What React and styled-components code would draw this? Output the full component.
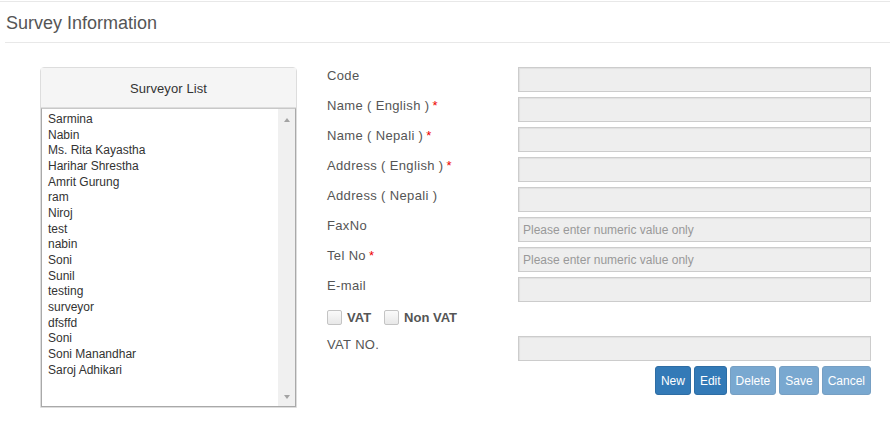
import React from "react";
import styled, { createGlobalStyle } from "styled-components";

const Global = createGlobalStyle`
  html, body { margin: 0; padding: 0; background: #fff; }
  body { font-family: "Liberation Sans", Arial, sans-serif; color: #555; }
  * { box-sizing: border-box; }
`;

const Page = styled.div`
  margin-top: 1px;
  border-top: 1px solid #e8e8e8;
  width: 890px;
  height: 425px;
`;

const Header = styled.div`
  margin-left: 5px;
  height: 41px;
  border-bottom: 1px solid #e8e8e8;
  display: flex;
  align-items: center;
  padding: 1px 0 0 1px;
`;

const Title = styled.h1`
  margin: 0;
  font-size: 18px;
  font-weight: normal;
  color: #555;
  line-height: 20px;
`;

const Main = styled.div`
  display: flex;
  align-items: flex-start;
  padding: 24px 19px 0 40px;
  gap: 30px;
`;

const Panel = styled.div`
  width: 257px;
  height: 341px;
  border: 1px solid #ddd;
  border-radius: 4px 4px 0 0;
  display: flex;
  flex-direction: column;
  background: #fff;
`;

const PanelHeading = styled.div`
  height: 40px;
  background: #f5f5f5;
  border-bottom: 1px solid #ddd;
  display: flex;
  align-items: center;
  justify-content: center;
  font-size: 13px;
  color: #333;
  letter-spacing: 0.1px;
  padding-top: 1px;
`;

const ListBox = styled.div`
  flex: 1;
  display: flex;
  border: 1px solid #a9a9a9;
  border-top-color: #c8c8c8;
  margin: 0;
`;

const Items = styled.ul`
  list-style: none;
  margin: 0;
  padding: 3px 0 0 6px;
  flex: 1;
  font-size: 12px;
  line-height: 15.65px;
  color: #333;
`;

const Item = styled.li`
  white-space: nowrap;
`;

const ScrollBar = styled.div`
  width: 17px;
  background: #f0f0f0;
  display: flex;
  flex-direction: column;
  justify-content: space-between;
  align-items: center;
  padding: 9px 0 7px 0;
`;

const Arrow = styled.span`
  width: 0;
  height: 0;
  border-left: 3.5px solid transparent;
  border-right: 3.5px solid transparent;
  ${(p) =>
    p.$down
      ? "border-top: 4px solid #a3a3a3;"
      : "border-bottom: 4px solid #a3a3a3;"}
`;

const Form = styled.div`
  flex: 1;
  display: flex;
  flex-direction: column;
`;

const Row = styled.div`
  display: flex;
  align-items: flex-start;
  height: 30px;
`;

const Label = styled.label`
  width: 191px;
  font-size: 13px;
  letter-spacing: 0.35px;
  color: #555;
  line-height: 20px;
  margin-top: -1px;
`;

const Req = styled.span`
  color: #e00;
  margin-left: 3px;
`;

const Input = styled.input`
  flex: 1;
  height: 25px;
  border: 1px solid #ccc;
  box-shadow: inset 1px 1px 1px rgba(0, 0, 0, 0.06);
  background: #eee;
  padding: 0 4px;
  font-family: "Liberation Sans", Arial, sans-serif;
  font-size: 12px;
  color: #555;
  outline: none;
  &::placeholder { color: #999; }
`;

const CheckRow = styled.div`
  display: flex;
  align-items: flex-start;
  height: 29px;
  padding-top: 3px;
`;

const CheckLabel = styled.label`
  display: flex;
  align-items: center;
  font-size: 13px;
  font-weight: bold;
  color: #555;
  margin-right: 13px;
`;

const Box = styled.span`
  width: 15px;
  height: 15px;
  border: 1px solid #c4c4c4;
  border-radius: 2px;
  background: linear-gradient(#fafafa, #e8e8e8);
  margin-right: 5px;
`;

const Buttons = styled.div`
  display: flex;
  justify-content: flex-end;
  gap: 3px;
`;

const Button = styled.button`
  height: 29px;
  padding: 0 5px;
  border: 1px solid #2e6da4;
  border-radius: 3px;
  background: #337ab7;
  color: #fff;
  font-family: "Liberation Sans", Arial, sans-serif;
  font-size: 12px;
  opacity: ${(p) => (p.disabled ? 0.65 : 1)};
  cursor: pointer;
`;

const surveyors = [
  "Sarmina",
  "Nabin",
  "Ms. Rita Kayastha",
  "Harihar Shrestha",
  "Amrit Gurung",
  "ram",
  "Niroj",
  "test",
  "nabin",
  "Soni",
  "Sunil",
  "testing",
  "surveyor",
  "dfsffd",
  "Soni",
  "Soni Manandhar",
  "Saroj Adhikari",
];

const fields = [
  { label: "Code" },
  { label: "Name ( English )", req: true },
  { label: "Name ( Nepali )", req: true },
  { label: "Address ( English )", req: true },
  { label: "Address ( Nepali )" },
  { label: "FaxNo", ph: "Please enter numeric value only" },
  { label: "Tel No", req: true, ph: "Please enter numeric value only" },
  { label: "E-mail" },
];

export default function App() {
  return (
    <>
      <Global />
      <Page>
        <Header>
          <Title>Survey Information</Title>
        </Header>
        <Main>
          <Panel>
            <PanelHeading>Surveyor List</PanelHeading>
            <ListBox>
              <Items>
                {surveyors.map((s, i) => (
                  <Item key={i}>{s}</Item>
                ))}
              </Items>
              <ScrollBar>
                <Arrow />
                <Arrow $down />
              </ScrollBar>
            </ListBox>
          </Panel>
          <Form>
            {fields.map((f) => (
              <Row key={f.label}>
                <Label>
                  {f.label}
                  {f.req && <Req>*</Req>}
                </Label>
                <Input placeholder={f.ph || ""} />
              </Row>
            ))}
            <CheckRow>
              <CheckLabel>
                <Box />
                VAT
              </CheckLabel>
              <CheckLabel>
                <Box />
                Non VAT
              </CheckLabel>
            </CheckRow>
            <Row>
              <Label>VAT NO.</Label>
              <Input />
            </Row>
            <Buttons>
              <Button>New</Button>
              <Button>Edit</Button>
              <Button disabled>Delete</Button>
              <Button disabled>Save</Button>
              <Button disabled>Cancel</Button>
            </Buttons>
          </Form>
        </Main>
      </Page>
    </>
  );
}
